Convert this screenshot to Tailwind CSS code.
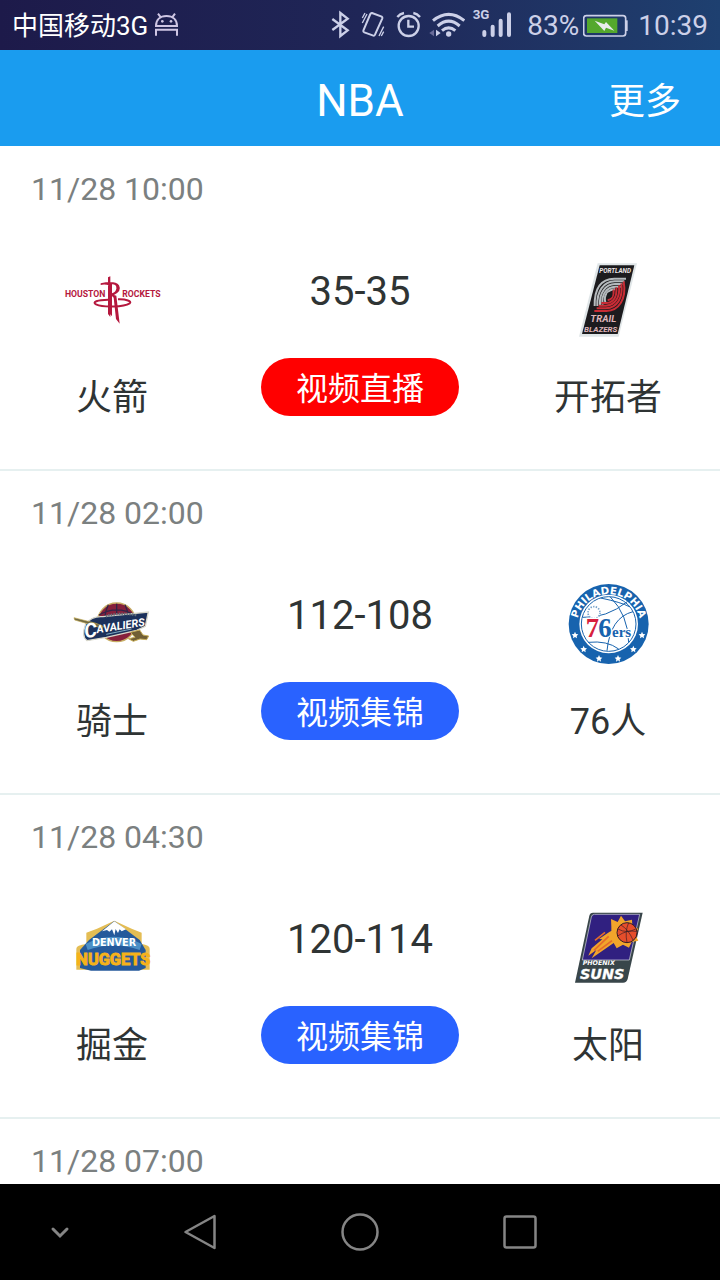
<!DOCTYPE html>
<html lang="zh-CN">
<head>
<meta charset="utf-8">
<meta name="viewport" content="width=device-width, initial-scale=1">
<title>NBA</title>
<script src="https://cdn.jsdelivr.net/npm/@tailwindcss/browser@4"></script>
</head>
<body class="flex h-screen flex-col overflow-hidden bg-white font-['Roboto','Noto_Sans_CJK_SC',sans-serif] text-[#2f3434]">

<!-- Status bar -->
<div class="flex h-[50px] shrink-0 items-center justify-between bg-linear-to-r from-[#1d1a4a] via-[#1f2657] to-[#1e4070] pr-3 pl-3 text-[#ccd0e8]">
  <div class="flex items-center gap-[6px]">
    <span class="pt-[2px] text-[26px] leading-[50px] text-white">中国移动3G</span>
    <svg class="h-[50px] w-[26px]" viewBox="462 0 78 150" fill="none" stroke="#cfc6e4" stroke-width="6" aria-hidden="true">
      <path d="M468 78c0-19 12-30 31.500-30s31.500 11 31.500 30zM474 41l9 12M525 41l-9 12"/>
      <path d="M468 107V89h63v18"/>
      <circle cx="487" cy="64" r="4" fill="#cfc6e4" stroke="none"/><circle cx="513" cy="64" r="4" fill="#cfc6e4" stroke="none"/>
    </svg>
  </div>
  <div class="flex items-center">
    <svg class="mr-[10px] h-[50px] w-[20px]" viewBox="33 0 60 150" fill="none" stroke="currentColor" stroke-width="7" aria-hidden="true"><path d="M37 57l46 34-22 17V39l22 17-46 34"/></svg>
    <svg class="mr-[11px] h-[50px] w-[24px]" viewBox="123 0 72 150" fill="none" stroke="currentColor" stroke-width="6" aria-hidden="true">
      <path d="M156 39l29 11q3 2 2 5l-22 49q-2 4-5 3l-27-10q-4-2-3-5l21-50q2-4 5-3z"/>
      <path d="M127 54l8-15M127 69l14-27M191 80l-14 28M191 95l-7 13" stroke-width="4"/>
    </svg>
    <svg class="mr-[7px] h-[50px] w-[26px]" viewBox="228 0 78 150" fill="none" stroke="currentColor" stroke-width="7" aria-hidden="true">
      <circle cx="266" cy="78" r="30"/><path d="M265 59v21h17M232 51q8-10 20-12M300 51q-8-10-20-12"/>
    </svg>
    <svg class="mr-[7px] h-[50px] w-[36px]" viewBox="327 0 108 150" fill="none" stroke="currentColor" stroke-width="9" aria-hidden="true">
      <path d="M339 62q47-38 94 0M353 78q33-29 66 0M366 92q20-17 40 0"/>
      <circle cx="386" cy="102" r="8" fill="currentColor" stroke="none"/>
      <path d="M342 89v20l-14-10z" fill="#686b99" stroke="none"/><path d="M348 89v20l14-10z" fill="currentColor" stroke="none"/>
    </svg>
    <svg class="mr-[15px] h-[50px] w-[40px]" viewBox="456 0 120 150" fill="none" stroke="currentColor" stroke-width="12" stroke-linecap="round" aria-hidden="true">
      <path d="M493 96v9M518 80v25M542 62v43M567 43v62"/>
      <text x="458" y="56" fill="currentColor" stroke="none" font-size="40" font-weight="700">3G</text>
    </svg>
    <span class="mr-[4px] pt-[2px] text-[28px] leading-[50px]">83%</span>
    <svg class="mr-[10px] h-[50px] w-[45px]" viewBox="219 0 135 150" aria-hidden="true">
      <rect x="221" y="47" width="126" height="61" rx="8" fill="none" stroke="#ccd0e8" stroke-width="5"/>
      <path d="M347 61h6v32h-6z" fill="#ccd0e8"/><path d="M231 55h91v44h-91z" fill="#54a82d"/>
      <path d="M254 62l29 11 5-7 25 26-25-9-5 10z" fill="#e8ecec"/>
    </svg>
    <span class="pt-[2px] text-[28px] leading-[50px]">10:39</span>
  </div>
</div>

<!-- Title bar -->
<header class="grid h-24 shrink-0 grid-cols-3 items-center bg-[#1a9cef] px-[39px] pt-[5px] text-white">
  <h1 class="col-start-2 text-center text-[44px] leading-[60px]">NBA</h1>
  <button type="button" class="justify-self-end pt-[2px] text-[36px] leading-[60px]">更多</button>
</header>

<!-- Games -->
<main class="min-h-0 flex-1 overflow-hidden pt-px">
  <article class="border-b-2 border-[#e6f0f0] pt-[22px] pb-[47px]">
    <time class="block px-[31px] text-[32px] leading-10 text-[#7b8080]">11/28 10:00</time>
    <div class="grid grid-cols-[224px_1fr_224px] text-center">
      <div class="flex flex-col items-center pt-[43px]">
        <svg class="size-24 overflow-visible" viewBox="42 -9 288 288" role="img" aria-label="Houston Rockets" font-weight="700" fill="#b5183e">
          <text x="45" y="127" font-size="26">HOUSTON</text>
          <text x="217" y="127" font-size="26">ROCKETS</text>
          <path d="M174 67l7-3v122l-7-9zM152 85q43-10 55 6 9 17-15 29l7 2 10 84-11-14-7-64-5-5v61l-8-10V91q-15-5-26-1z"/>
          <path d="M186 88q14 0 13 12t-13 15z" fill="#fff"/>
          <path d="M174 134c-32 0-49 8-36 14 22 10 84 8 101-3 8-6-10-13-35-12" fill="none" stroke="#b5183e" stroke-width="6"/>
        </svg>
        <p class="mt-[26px] text-[36px] leading-[48px]">火箭</p>
      </div>
      <div class="flex flex-col items-center pt-[59px]">
        <p class="text-[40px] leading-[48px]">35-35</p>
        <button type="button" class="mt-[42px] h-[58px] w-[198px] rounded-full bg-[#ff0000] pt-1 text-[32px] leading-[54px] text-white">视频直播</button>
      </div>
      <div class="flex flex-col items-center pt-[43px]">
        <svg class="size-24" viewBox="0 6 288 288" role="img" aria-label="Portland Trail Blazers" font-weight="700" font-style="italic">
          <path d="M113 40h118l-55 220H57z" fill="#dfe5e7"/><path d="M119 46h104l-50 206H66z" fill="#1c1b1e"/>
          <text x="118" y="69" font-size="19" fill="#f0e9e9">PORTLAND</text>
          <g fill="none" stroke="#b5babd" stroke-width="6">
            <path d="M104 168C103 115 124 87 163 86h35"/><path d="M112 168c-2-46 19-73 52-74h29"/><path d="M120 167c-3-38 16-64 45-65h22"/><path d="M128 164c-5-30 12-53 38-54h16"/><path d="M136 157c-6-22 8-38 29-39"/>
          </g>
          <g fill="none" stroke="#c92c35" stroke-width="6">
            <path d="M191 94c9 54-14 87-52 89h-36"/><path d="M184 100c6 46-14 73-46 75h-28"/><path d="M177 106c4 37-12 59-39 61h-22"/><path d="M169 112c2 29-9 45-29 47h-16"/><path d="M161 118c1 20-5 31-18 33"/>
          </g>
          <circle cx="149" cy="135" r="8" fill="#1c1b1e"/>
          <text x="91" y="216" font-size="29" fill="#dfb5ba">TRAIL</text>
          <text x="72" y="246" font-size="24" fill="#dfb5ba">BLAZERS</text>
        </svg>
        <p class="mt-[26px] text-[36px] leading-[48px]">开拓者</p>
      </div>
    </div>
  </article>

  <article class="border-b-2 border-[#e6f0f0] pt-[22px] pb-[47px]">
    <time class="block px-[31px] text-[32px] leading-10 text-[#7b8080]">11/28 02:00</time>
    <div class="grid grid-cols-[224px_1fr_224px] text-center">
      <div class="flex flex-col items-center pt-[43px]">
        <svg class="size-24" viewBox="12 -42 288 288" role="img" aria-label="Cleveland Cavaliers" font-weight="700" font-style="italic">
          <ellipse cx="170" cy="97" rx="58" ry="58" fill="#86203c" stroke="#c7ad63" stroke-width="4"/>
          <path d="M117 75q54-31 106 0M170 41v80M145 44q-17 35-8 78M195 44q17 35 8 78" fill="none" stroke="#312448" stroke-width="4"/>
          <path d="M77 102q19-25 52-22l136-14-9 43-26 12-91 21-58 10q-18-12-4-50z" fill="#1c315b" stroke="#d9d8cb" stroke-width="4"/>
          <path d="M42 83l66 17 22 9-3 7-24-9-59-17z" fill="#6f6845" stroke="#c3ab55" stroke-width="2"/>
          <path d="M211 127l28-7 10 15 17 3-6 11-20-2-20 7-15-8 20-4z" fill="#715f35" stroke="#c8ae59" stroke-width="3"/>
          <path d="M137 79q40-13 95-3" stroke="#64717c" stroke-width="7" stroke-dasharray="5 3" fill="none"/>
          <g transform="rotate(-9 160 112)" fill="#fff">
            <text x="72" y="131" font-size="60">C</text>
            <text x="109" y="122" font-size="33">AVALIERS</text>
          </g>
          <path d="M139 133l76-16" stroke="#7daac2" stroke-width="3"/>
        </svg>
        <p class="mt-[26px] text-[36px] leading-[48px]">骑士</p>
      </div>
      <div class="flex flex-col items-center pt-[59px]">
        <p class="text-[40px] leading-[48px]">112-108</p>
        <button type="button" class="mt-[42px] h-[58px] w-[198px] rounded-full bg-[#2962ff] pt-1 text-[32px] leading-[54px] text-white">视频集锦</button>
      </div>
      <div class="flex flex-col items-center pt-[43px]">
        <svg class="size-24" viewBox="0 3 288 288" role="img" aria-label="Philadelphia 76ers" font-family="Liberation Serif" font-weight="700">
          <defs><path id="ring" d="M52 166a95 95 0 1 1 188 0"/></defs>
          <circle cx="146" cy="147" r="120" fill="#1763ae"/>
          <circle cx="146" cy="147" r="88" fill="#fff"/><circle cx="146" cy="147" r="82" fill="#fff" stroke="#1763ae" stroke-width="3"/>
          <g fill="none" stroke="#1763ae" stroke-width="3">
            <path d="M122 69q62 13 86 26M68 127q71 3 134-47M151 66q53 53 55 136M219 110q-68 17-78 117M85 202q56-6 91 20"/>
          </g>
          <circle cx="102" cy="113" r="18" fill="#fff" stroke="#729fc9" stroke-width="5" stroke-dasharray="4 4"/>
          <text font-size="31" fill="#fff" font-family="DejaVu Sans"><textPath href="#ring" startOffset="50%" text-anchor="middle">PHILADELPHIA</textPath></text>
          <g stroke="#fff" stroke-width="7">
            <text x="77" y="187" font-size="80" fill="#d7203d" paint-order="stroke">7</text>
            <text x="115" y="187" font-size="80" fill="#1763ae" paint-order="stroke">6</text>
            <text x="156" y="186" font-size="45" fill="#1763ae" paint-order="stroke">ers</text>
          </g>
          <g fill="#fff">
            <path id="star" d="M45 170l3 7 7 1-5 5 1 7-6-4-6 4 1-7-5-5 7-1z"/>
            <use href="#star" x="26" y="42"/><use href="#star" x="72" y="70"/><use href="#star" x="129" y="70"/><use href="#star" x="175" y="42"/><use href="#star" x="201"/>
          </g>
        </svg>
        <p class="mt-[26px] text-[36px] leading-[48px]">76人</p>
      </div>
    </div>
  </article>

  <article class="border-b-2 border-[#e6f0f0] pt-[22px] pb-[47px]">
    <time class="block px-[31px] text-[32px] leading-10 text-[#7b8080]">11/28 04:30</time>
    <div class="grid grid-cols-[224px_1fr_224px] text-center">
      <div class="flex flex-col items-center pt-[43px]">
        <svg class="size-24" viewBox="12 -30 288 288" role="img" aria-label="Denver Nuggets" font-weight="700">
          <path d="M79 68l32-12 52-24 52 24 30 12v34q24 4 24 14v63H49v-63q0-10 30-14z" fill="#e4bd54"/>
          <path d="M163 33l76 57 18 30v54l-20 8H93l-33-8v-54l27-30z" fill="#24599b"/>
          <path d="M163 34l35 24-13 6-6-6-5 11-7-12-4 19-7-18-8 7-7-5-15 4z" fill="#fff"/>
          <path d="M77 102q86-43 168 0l-6 18q-78-28-156 0z" fill="#4b8fc6"/>
          <text x="162" y="107" text-anchor="middle" font-size="29" fill="#fff" font-family="DejaVu Sans">DENVER</text>
          <text x="160" y="166" font-size="49" text-anchor="middle" fill="#f6b21a" stroke="#f6b21a" stroke-width="3">NUGGETS</text>
        </svg>
        <p class="mt-[26px] text-[36px] leading-[48px]">掘金</p>
      </div>
      <div class="flex flex-col items-center pt-[59px]">
        <p class="text-[40px] leading-[48px]">120-114</p>
        <button type="button" class="mt-[42px] h-[58px] w-[198px] rounded-full bg-[#2962ff] pt-1 text-[32px] leading-[54px] text-white">视频集锦</button>
      </div>
      <div class="flex flex-col items-center pt-[43px]">
        <svg class="size-24" viewBox="0 0 288 288" role="img" aria-label="Phoenix Suns" font-family="DejaVu Sans" font-weight="700" font-style="italic">
          <path d="M99 38h149l-45 199q-3 11-14 11H45l43-201q2-9 11-9z" fill="#39464a"/>
          <path d="M103 43h136l-31 137H67L94 51q2-8 9-8z" fill="#302080" stroke="#d6d9df" stroke-width="2"/>
          <path d="M154 80l-1-23 20 9 10-19 12 17 21-5 1 20 18 7-10 17 10 19-20 4-8 17-18-9-19 11-9-16-66 46 14-25-24 17 10-22 32-27-10-1 32-22 5-2z" fill="#f2a52b"/>
          <path d="M146 109l-44 42M156 122l-43 32M135 97l-30 24" stroke="#e46b2a" stroke-width="5"/>
          <circle cx="201" cy="98" r="30" fill="#e64e2b" stroke="#351c26" stroke-width="3"/>
          <path d="M174 87q26 15 53 0M206 68q-12 27-5 59M183 75q22 13 36 45M173 108q27-19 55-14" fill="none" stroke="#351c26" stroke-width="2"/>
          <text x="68" y="194" font-size="19" fill="#fff">PHOENIX</text>
          <text x="60" y="236" font-size="43" fill="#fff" stroke="#fff" stroke-width="1">SUNS</text>
        </svg>
        <p class="mt-[26px] text-[36px] leading-[48px]">太阳</p>
      </div>
    </div>
  </article>

  <article class="pt-[22px]">
    <time class="block px-[31px] text-[32px] leading-10 text-[#7b8080]">11/28 07:00</time>
  </article>
</main>

<!-- System navigation -->
<nav class="grid h-24 shrink-0 grid-cols-[3fr_4fr_4fr_4fr_3fr] bg-black text-[#858585]" aria-label="系统导航">
  <button type="button" class="flex items-center justify-center" aria-label="隐藏"><svg class="size-12" viewBox="0 0 48 48" fill="none" stroke="currentColor" stroke-width="3" stroke-linecap="round"><path d="M17 21l7 7 7-7"/></svg></button>
  <button type="button" class="flex items-center justify-center" aria-label="返回"><svg class="size-12" viewBox="0 0 48 48" fill="none" stroke="currentColor" stroke-width="2.500" stroke-linejoin="round"><path d="M38.500 8v32L9.500 24z"/></svg></button>
  <button type="button" class="flex items-center justify-center" aria-label="主页"><svg class="size-12" viewBox="0 0 48 48" fill="none" stroke="currentColor" stroke-width="2.500"><circle cx="24" cy="24" r="17.500"/></svg></button>
  <button type="button" class="flex items-center justify-center" aria-label="最近任务"><svg class="size-12" viewBox="0 0 48 48" fill="none" stroke="currentColor" stroke-width="2.500"><rect x="8.500" y="8.500" width="31" height="31" rx="2"/></svg></button>
</nav>
</body>
</html>
